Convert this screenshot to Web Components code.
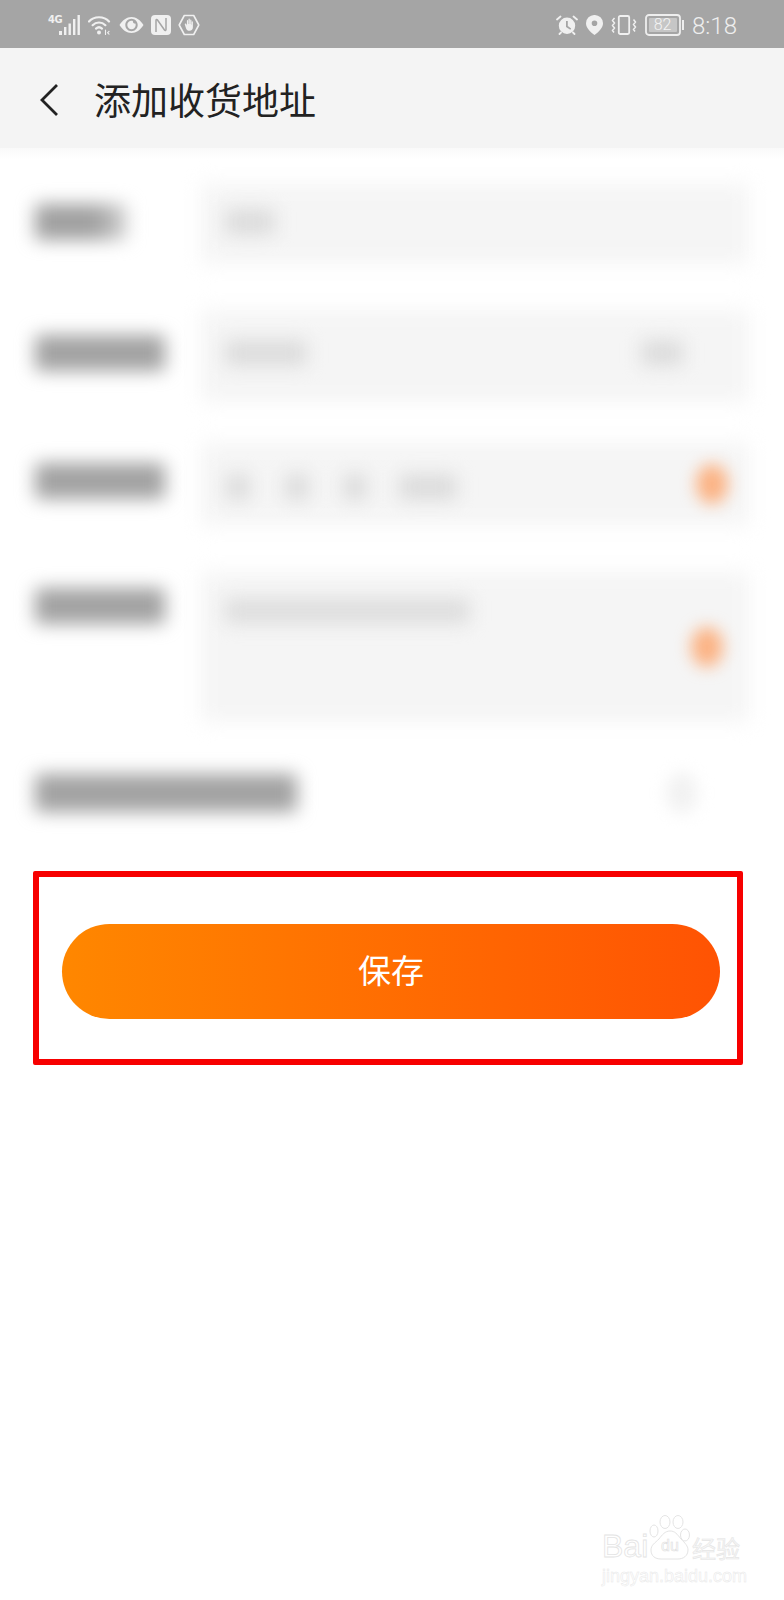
<!DOCTYPE html>
<html lang="zh">
<head>
<meta charset="utf-8">
<title>添加收货地址</title>
<style>
  html, body { margin: 0; background: #fff; }
  body { font-family: "Noto Sans CJK SC", "Noto Sans", sans-serif; }
</style>
</head>
<body>
<address-page></address-page>

<template id="status-bar-tpl">
  <style>
    :host { display: flex; justify-content: space-between; align-items: center; height: 48px; padding: 1px 47px 0 48px; background: #a5a5a5; color: #f0f0f0; box-sizing: border-box; }
    .group { display: flex; align-items: center; gap: 7px; height: 47px; }
    .group.right { gap: 8px; }
    svg { display: block; }
    .net { display: flex; width: 33px; height: 20px; position: relative; }
    .net b { font: bold 11px/10px "DejaVu Sans Condensed", "DejaVu Sans", sans-serif; letter-spacing: -0.5px; }
    .net svg { position: absolute; left: 11px; top: 0; }
    .time { font: 300 24px/28px Roboto, sans-serif; color: #eee; position: relative; top: 1px; }
    .battery { position: relative; width: 39px; height: 22px; }
    .battery span { position: absolute; left: 2px; top: 2px; width: 31px; height: 18px; text-align: center; font: 300 16px/18px Roboto, sans-serif; color: #f4f4f4; }
  </style>
  <div class="group">
    <div class="net"><b>4G</b>
      <svg width="22" height="20" viewBox="0 0 22 20" fill="#f0f0f0"><rect x="0" y="16" width="3" height="4"/><rect x="5" y="12" width="2.400" height="8"/><rect x="9.500" y="8.500" width="2.400" height="11.500"/><rect x="14" y="4" width="2.400" height="16"/><rect x="18.500" y="0" width="2.400" height="20"/></svg>
    </div>
    <svg width="24" height="20" viewBox="0 0 24 20" fill="none" stroke="#f0f0f0" stroke-width="2.200" stroke-linecap="round"><path d="M1 6.500C6 .8 16 .8 21 6.500"/><path d="M4.600 10.200c3.600-3.600 9.200-3.600 12.800 0"/><path d="M8 13.600c1.800-1.600 4.200-1.600 6 0"/><circle cx="11" cy="17.500" r="2" fill="#f0f0f0" stroke="none"/><path d="M17.500 15v4.600M21 16.400l-1.400 1.400 1.400 1.400" stroke-width="1.100"/></svg>
    <svg width="25" height="18" viewBox="0 0 25 18"><path fill="#f0f0f0" fill-rule="evenodd" d="M.5 9C3.600 4 7.800 1 12.500 1S21.400 4 24.500 9c-3.100 5-7.300 8-12 8S3.600 14 .5 9zm12-6.200C9.100 2.800 6.300 5.600 6.300 9s2.800 6.200 6.200 6.200 6.200-2.800 6.200-6.200-2.800-6.200-6.200-6.200z"/><path fill="#f0f0f0" d="M12.500 4.800a4.200 4.200 0 1 0 4.200 4.200c0-.5-.1-1-.3-1.500a2.100 2.100 0 0 1-2.500-2.500c-.4-.1-.9-.2-1.400-.2z"/></svg>
    <svg width="20" height="20" viewBox="0 0 20 20"><rect width="20" height="20" rx="4" fill="#f0f0f0"/><path fill="none" stroke="#a5a5a5" stroke-width="1.500" d="M5 17V5.500c0-1 .9-1.300 1.500-.5l7 10c.6.800 1.500.5 1.500-.5V3"/></svg>
    <svg width="22" height="22" viewBox="0 0 22 22"><path fill="none" stroke="#f0f0f0" stroke-width="1.600" stroke-linejoin="round" d="M6.300 1.500h9.400L20.800 11l-5.100 9.500H6.300L1.200 11z"/><path fill="#f0f0f0" d="M6.800 10.500c-.2-1 1.100-1.300 1.500-.4l.6 1.400V6.700c0-1 1.200-1 1.200 0v3.300h.4V5.300c0-1 1.300-1 1.300 0V10h.4V6.200c0-1 1.200-1 1.200 0V10.800h.3V8c0-.9 1.200-.9 1.200 0v5.200c0 2.100-1.300 3.500-3.400 3.500-1.700 0-2.800-.8-3.400-2.300z"/></svg>
  </div>
  <div class="group right">
    <svg width="22" height="20" viewBox="0 0 22 20"><path fill="#f0f0f0" fill-rule="evenodd" d="M11 2.500a8.200 8.200 0 1 1 0 16.400 8.200 8.200 0 0 1 0-16.400zM10 6v6l4.300 2.800.9-1.300L11.800 11V6z"/><path fill="none" stroke="#f0f0f0" stroke-width="1.800" stroke-linecap="round" d="M1 4.500 4.500 1.500M21 4.500 17.500 1.500M3.500 19l1.500-1.500M18.500 19 17 17.500"/></svg>
    <svg width="17" height="20" viewBox="0 0 17 20"><path fill="#f0f0f0" fill-rule="evenodd" d="M8.500 0A8.300 8.300 0 0 1 17 8.300c0 4.400-4 8.600-8.500 11.700C4 16.900 0 12.700 0 8.300A8.300 8.300 0 0 1 8.500 0zm0 5.500a2.800 2.800 0 1 0 0 5.600 2.800 2.800 0 0 0 0-5.600z"/></svg>
    <svg width="26" height="20" viewBox="0 0 26 20" fill="none" stroke="#f0f0f0"><rect x="7.800" y="1" width="10.400" height="18" rx="1.500" stroke-width="1.800"/><path stroke-width="1.500" d="M3.500 3 1.500 5.500 3.500 8 1.500 10.500 3.500 13 1.500 15.500 3 17.500M22.500 4.500 24.500 7 22.500 9.500 24.500 12 22.500 14.500 24 16.500"/></svg>
    <div class="battery">
      <svg width="39" height="22" viewBox="0 0 39 22"><rect x="1" y="1" width="34" height="20" rx="3" fill="none" stroke="#eee" stroke-width="1.800"/><rect x="4" y="4" width="28" height="14" rx="1" fill="#c6c6c6"/><rect x="37" y="6" width="2" height="10" fill="#eee"/></svg>
      <span>82</span>
    </div>
    <span class="time">8:18</span>
  </div>
</template>

<template id="app-header-tpl">
  <style>
    :host { display: flex; align-items: center; height: 100px; padding: 3px 0 0 40px; background: #f4f4f4; box-sizing: border-box; }
    svg { display: block; margin-right: 36px; }
    h1 { margin: 0; font: 400 37px/97px "Noto Sans CJK SC", sans-serif; color: #222; }
  </style>
  <svg width="18" height="32" viewBox="0 0 18 32" fill="none" stroke="#222" stroke-width="2.800"><path d="M17 1 2 16l15 15"/></svg>
  <h1><slot></slot></h1>
</template>

<template id="form-row-tpl">
  <style>
    :host { display: grid; grid-template-columns: 166px 1fr; position: relative; padding-left: 35px; box-sizing: border-box; }
    .lab { height: 100%; }
    ::slotted(blur-blob) { display: block; }
  </style>
  <div class="lab"><slot name="label"></slot></div>
  <div><slot></slot></div>
</template>

<template id="blur-blob-tpl">
  <style>
    :host { display: block; filter: blur(var(--b, 9px)); background: var(--c, #a2a2a2); border-radius: 4px; }
  </style>
</template>

<template id="input-box-tpl">
  <style>
    :host { display: flex; position: relative; box-sizing: border-box; height: var(--h, 80px); margin-right: 35px; }
    .bg { position: absolute; inset: 0; background: #f5f5f5; filter: blur(10px); border-radius: 4px; }
    .in { position: relative; flex: 1; display: flex; }
  </style>
  <div class="bg"></div>
  <div class="in"><slot></slot></div>
</template>

<template id="save-button-tpl">
  <style>
    :host { display: block; margin: 0 41px 0 33px; padding: 47px 17px 40px 23px; border: 6px solid #f70000; border-radius: 2px; box-sizing: border-box; height: 194px; }
    .btn { display: flex; align-items: center; justify-content: center; height: 95px; padding-bottom: 4px; box-sizing: border-box; border-radius: 48px; background: linear-gradient(90deg, #ff8700, #ff5303); color: #fff; font: 400 33px/91px "Noto Sans CJK SC", sans-serif; }
  </style>
  <div class="btn"><slot></slot></div>
</template>

<template id="baidu-mark-tpl">
  <style>
    :host { position: absolute; left: 602px; top: 1515px; display: block; width: 142px; color: #fff; }
    .top { display: flex; align-items: flex-end; height: 45px; }
    .bai { font: 400 32px/27px "Liberation Sans", sans-serif; width: 46px; -webkit-text-stroke: .8px #e4e4e4; }
    .paw { position: relative; width: 44px; height: 45px; }
    .paw svg { display: block; }
    .paw span { position: absolute; left: 8px; top: 23px; width: 28px; text-align: center; font: 400 16px/16px "Liberation Sans", sans-serif; color: #fff; -webkit-text-stroke: .6px #dedede; }
    .jy { font: 400 24px/25px "Noto Sans CJK SC", sans-serif; -webkit-text-stroke: .6px #e6e6e6; color: #f6f6f6; white-space: nowrap; }
    .url { font: 400 18px/18px "Liberation Sans", sans-serif; color: #fff; -webkit-text-stroke: .5px #e8e8e8; margin-top: 7px; white-space: nowrap; }
  </style>
  <div class="top">
    <span class="bai">Bai</span>
    <div class="paw">
      <svg width="44" height="45" viewBox="0 0 44 45" fill="#fff" stroke="#e4e4e4" stroke-width="1">
        <ellipse cx="6" cy="16" rx="4" ry="6"/><ellipse cx="17" cy="7" rx="5" ry="6.500"/><ellipse cx="30" cy="7" rx="5" ry="6.500"/><ellipse cx="37" cy="20" rx="4.500" ry="6"/>
        <path d="M22 16c5 0 7 3 11 8 4 4 7 7 7 11 0 6-5 9-10 9H13c-6 0-10-3-10-9 0-5 4-7 8-11 3-4 6-8 11-8z"/>
      </svg>
      <span>du</span>
    </div>
    <span class="jy">经验</span>
  </div>
  <div class="url">jingyan.baidu.com</div>
</template>

<script>
  function fromTpl(id) {
    return document.getElementById(id).content.cloneNode(true);
  }

  class TplElement extends HTMLElement {
    constructor(id) {
      super();
      this.attachShadow({ mode: "open" });
      this.shadowRoot.appendChild(fromTpl(id));
    }
  }

  customElements.define("status-bar", class extends TplElement { constructor() { super("status-bar-tpl"); } });
  customElements.define("app-header", class extends TplElement { constructor() { super("app-header-tpl"); } });
  customElements.define("form-row", class extends TplElement { constructor() { super("form-row-tpl"); } });
  customElements.define("blur-blob", class extends TplElement { constructor() { super("blur-blob-tpl"); } });
  customElements.define("input-box", class extends TplElement { constructor() { super("input-box-tpl"); } });
  customElements.define("save-button", class extends TplElement { constructor() { super("save-button-tpl"); } });
  customElements.define("baidu-mark", class extends TplElement { constructor() { super("baidu-mark-tpl"); } });

  class AddressPage extends HTMLElement {
    constructor() {
      super();
      this.attachShadow({ mode: "open" });
      // the form is blurred out in the screenshot, so its rows are only soft blobs
      this.shadowRoot.innerHTML = `
        <style>
          :host { display: block; position: relative; width: 784px; height: 1600px; background: #fff; overflow: hidden; }
          .form { display: flex; flex-direction: column; padding-top: 36px; height: 723px; box-sizing: border-box; }
          .top-fade { height: 12px; margin-bottom: -12px; background: linear-gradient(#f9f9f9, #fff); }
          .r1 { margin-bottom: 46px; }
          .r2 { margin-bottom: 41px; }
          .r3 { margin-bottom: 47px; }
          .r4 { margin-bottom: 43px; }
          input-box { padding: 0 22px; }
          blur-blob { flex: none; }
          .ph { --c: #dcdcdc; --b: 9px; height: 26px; }
          .label { height: 36px; }
          .dot { --c: #fbb283; --b: 8px; width: 32px; height: 40px; border-radius: 50%; margin-left: auto; }
        </style>
        <status-bar></status-bar>
        <app-header>添加收货地址</app-header>
        <div class="top-fade"></div>
        <div class="form">
          <form-row class="r1">
            <blur-blob slot="label" class="label" style="width:92px;margin-top:20px;background:linear-gradient(90deg,#a0a0a0 65%,#d4d4d4)"></blur-blob>
            <input-box style="--h:80px">
              <blur-blob class="ph" style="width:50px;margin:25px 0 0 2px"></blur-blob>
            </input-box>
          </form-row>
          <form-row class="r2">
            <blur-blob slot="label" class="label" style="width:130px;margin-top:25px"></blur-blob>
            <input-box style="--h:92px">
              <blur-blob class="ph" style="width:82px;margin:30px 0 0 2px"></blur-blob>
              <blur-blob class="ph" style="width:42px;margin:30px 0 0 334px"></blur-blob>
            </input-box>
          </form-row>
          <form-row class="r3">
            <blur-blob slot="label" class="label" style="width:130px;margin-top:20px"></blur-blob>
            <input-box style="--h:82px">
              <blur-blob class="ph" style="width:24px;margin:31px 0 0 3px"></blur-blob>
              <blur-blob class="ph" style="width:24px;margin:31px 0 0 35px"></blur-blob>
              <blur-blob class="ph" style="width:24px;margin:31px 0 0 34px"></blur-blob>
              <blur-blob class="ph" style="width:58px;margin:31px 0 0 32px"></blur-blob>
              <blur-blob class="dot" style="margin-top:21px;margin-right:-1px"></blur-blob>
            </input-box>
          </form-row>
          <form-row class="r4">
            <blur-blob slot="label" class="label" style="width:130px;margin-top:16px"></blur-blob>
            <input-box style="--h:150px">
              <blur-blob class="ph" style="width:245px;margin:26px 0 0 2px;--c:#dedede"></blur-blob>
              <blur-blob class="dot" style="margin-top:55px;margin-right:4px"></blur-blob>
            </input-box>
          </form-row>
          <form-row>
            <blur-blob slot="label" class="label" style="width:262px;height:38px;margin-top:9px"></blur-blob>
            <div style="display:flex;justify-content:flex-end;padding-right:86px">
              <blur-blob style="--c:#f2f2f2;--b:8px;width:32px;height:42px;border-radius:50%;margin-top:7px"></blur-blob>
            </div>
          </form-row>
        </div>
        <save-button>保存</save-button>
        <baidu-mark></baidu-mark>
      `;
    }
  }
  customElements.define("address-page", AddressPage);
</script>
</body>
</html>
